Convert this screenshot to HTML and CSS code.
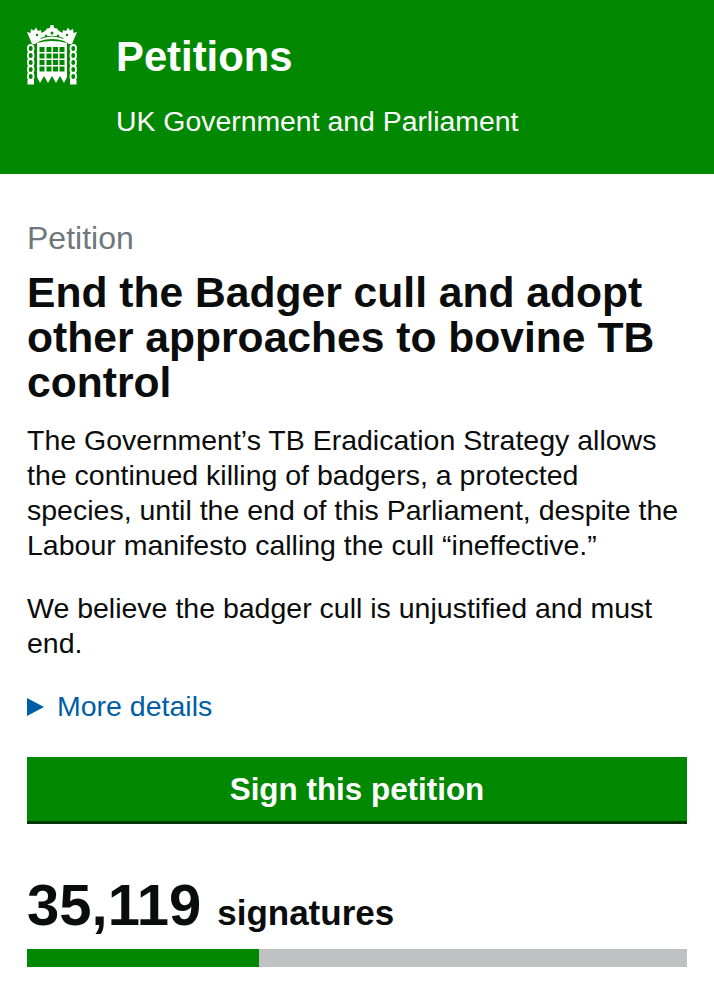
FILE: index.html
```html
<!DOCTYPE html>
<html lang="en">
<head>
<meta charset="utf-8">
<title>Petitions</title>
<link rel="stylesheet" href="styles.css">
</head>
<body>
<header class="site-header">
  <svg class="crest" viewBox="0 0 52 62" width="52" height="62" aria-hidden="true">
    <g fill="#fff">
      <path d="M6 19 L1 7 L4.500 8 L5 4 L8 5.500 L10 2.500 L12 6 L15 5 L15.500 8 L19 6 L21 3.500 L24 3 L24.500 0 H27.500 L28 3 L31 3.500 L33 6 L36.500 8 L37 5 L40 6 L42 2.500 L44 5.500 L47 4 L47.500 8 L51 7 L46 19 L43 19 L38 16 Q26 12 14 16 L9 19 Z"/>
      <path d="M11 18 Q26 14 41 18 V52 L38 58 L34 51 L30 58 L26 51 L22 58 L18 51 L14 58 L11 52 Z"/>
    </g>
    <g fill="#008800">
      <circle cx="11" cy="10" r="1.200"/><circle cx="20" cy="11" r="1.300"/><circle cx="26" cy="8" r="1.500"/><circle cx="32" cy="11" r="1.300"/><circle cx="41" cy="10" r="1.200"/>
      <path d="M14 14 Q26 9 38 14 L37 12.800 Q26 8.800 15 12.800 Z"/>
      <rect x="13.500" y="22" width="5" height="5"/><rect x="20.500" y="22" width="5" height="5"/><rect x="27" y="22" width="5" height="5"/><rect x="33.500" y="22" width="5" height="5"/>
      <rect x="13.500" y="28.500" width="5" height="5"/><rect x="20.500" y="28.500" width="5" height="5"/><rect x="27" y="28.500" width="5" height="5"/><rect x="33.500" y="28.500" width="5" height="5"/>
      <rect x="13.500" y="35" width="5" height="5"/><rect x="20.500" y="35" width="5" height="5"/><rect x="27" y="35" width="5" height="5"/><rect x="33.500" y="35" width="5" height="5"/>
      <rect x="13.500" y="41.500" width="5" height="5"/><rect x="20.500" y="41.500" width="5" height="5"/><rect x="27" y="41.500" width="5" height="5"/><rect x="33.500" y="41.500" width="5" height="5"/>
    </g>
    <g fill="none" stroke="#fff" stroke-width="1.800">
      <rect x="2" y="20" width="5.500" height="7" rx="2.700"/><rect x="2" y="27" width="5.500" height="7" rx="2.700"/><rect x="2" y="34" width="5.500" height="7" rx="2.700"/><rect x="2" y="41" width="5.500" height="7" rx="2.700"/><rect x="2" y="48" width="5.500" height="7" rx="2.700"/>
      <rect x="44.500" y="20" width="5.500" height="7" rx="2.700"/><rect x="44.500" y="27" width="5.500" height="7" rx="2.700"/><rect x="44.500" y="34" width="5.500" height="7" rx="2.700"/><rect x="44.500" y="41" width="5.500" height="7" rx="2.700"/><rect x="44.500" y="48" width="5.500" height="7" rx="2.700"/>
    </g>
    <g fill="#fff">
      <rect x="1.500" y="55" width="6.500" height="4.500"/><rect x="44" y="55" width="6.500" height="4.500"/>
    </g>
  </svg>
  <div class="brand">
    <div class="brand-name">Petitions</div>
    <div class="brand-sub">UK Government and Parliament</div>
  </div>
</header>
<main class="content">
  <p class="eyebrow">Petition</p>
  <h1 class="title">End the Badger cull and adopt other approaches to bovine TB control</h1>
  <p class="body-text">The Government’s TB Eradication Strategy allows the continued killing of badgers, a protected species, until the end of this Parliament, despite the Labour manifesto calling the cull “ineffective.”</p>
  <p class="body-text second">We believe the badger cull is unjustified and must end.</p>
  <div class="details">
    <span class="triangle"></span>
    <a class="details-link" href="#">More details</a>
  </div>
  <a class="sign-button" href="#">Sign this petition</a>
  <div class="count"><span class="count-num">35,119</span><span class="count-label">signatures</span></div>
  <div class="progress"><div class="progress-fill" style="width:35.1%"></div></div>
</main>
</body>
</html>
```
FILE: styles.css
```css
* { box-sizing: border-box; }
html, body { margin: 0; padding: 0; }
body {
  background: #fff;
  color: #0b0c0c;
  font-family: "Liberation Sans", Arial, sans-serif;
  width: 714px;
  height: 1000px;
  overflow: hidden;
}
.site-header {
  background: #008800;
  color: #fff;
  height: 174px;
  display: flex;
  gap: 38px;
  padding: 25px 0 0 26px;
}
.crest { flex: none; }
.brand-name {
  font-size: 41.800px;
  font-weight: 700;
  line-height: 44px;
  margin-top: 10px;
}
.brand-sub {
  font-size: 28.400px;
  line-height: 32px;
  margin-top: 26px;
}
.content { padding: 46px 27px 0; }
.eyebrow {
  margin: 0;
  font-size: 32px;
  line-height: 36px;
  color: #6f777b;
}
.title {
  margin: 14px 0 0;
  font-size: 42.600px;
  line-height: 45px;
  font-weight: 700;
}
.body-text {
  margin: 18px 0 0;
  font-size: 28.500px;
  line-height: 35px;
}
.body-text.second { margin-top: 28px; }
.details {
  display: flex;
  align-items: center;
  gap: 13px;
  margin-top: 28px;
  height: 35px;
}
.triangle {
  width: 0;
  height: 0;
  border-left: 17px solid #005ea5;
  border-top: 9px solid transparent;
  border-bottom: 9px solid transparent;
}
.details-link {
  font-size: 28.500px;
  color: #005ea5;
  text-decoration: none;
}
.sign-button {
  display: block;
  margin-top: 33px;
  height: 67px;
  background: #008800;
  border-bottom: 3px solid #003a00;
  color: #fff;
  font-size: 31.400px;
  font-weight: 700;
  line-height: 65px;
  text-align: center;
  text-decoration: none;
}
.count {
  display: flex;
  align-items: baseline;
  gap: 16px;
  margin-top: 46px;
  line-height: 70px;
  height: 70px;
}
.count-num { font-size: 58px; font-weight: 700; }
.count-label { font-size: 35px; font-weight: 700; }
.progress {
  margin-top: 9px;
  height: 18px;
  background: #bfc1c3;
}
.progress-fill { height: 100%; background: #008800; }
```
